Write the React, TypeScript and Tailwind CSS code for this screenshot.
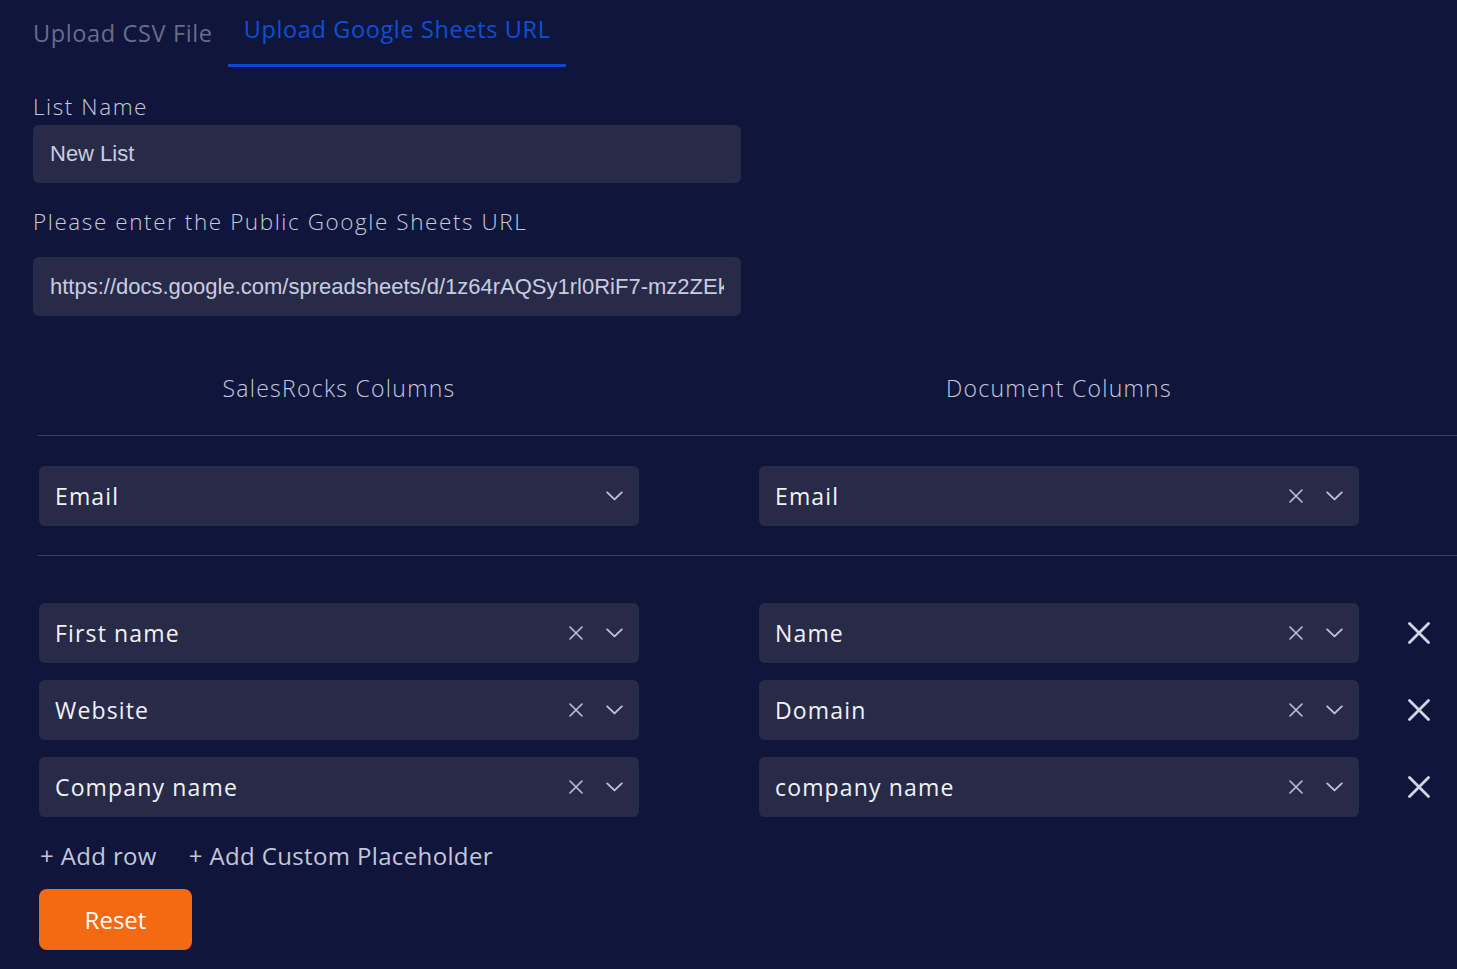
import React from "react";

const SmallX = () => (
  <svg width="14" height="14" viewBox="0 0 14 14" fill="none">
    <path d="M1 1L13 13M13 1L1 13" stroke="#bec1d5" strokeWidth="1.6" strokeLinecap="round" />
  </svg>
);

const Chevron = () => (
  <svg width="17" height="10" viewBox="0 0 17 10" fill="none">
    <path d="M1.2 1.4L8.5 8.4L15.8 1.4" stroke="#bec1d5" strokeWidth="1.9" strokeLinecap="round" strokeLinejoin="round" />
  </svg>
);

const BigX = () => (
  <svg width="22" height="22" viewBox="0 0 22 22" fill="none">
    <path d="M1.5 1.5L20.5 20.5M20.5 1.5L1.5 20.5" stroke="#d3d5e7" strokeWidth="2.8" strokeLinecap="round" />
  </svg>
);

function Select({ value, clearable = true }: { value: string; clearable?: boolean }) {
  return (
    <div className="flex items-center h-[60px] w-[600px] rounded-[6px] bg-[#282b48] pl-[16px] pr-[7px]">
      <div className="flex-1 text-[23px] text-[#f1f2f7] tracking-[0.05em] leading-none">{value}</div>
      {clearable && (
        <div className="w-[40px] flex justify-center items-center">
          <SmallX />
        </div>
      )}
      <div className="w-[36px] flex justify-center items-center">
        <Chevron />
      </div>
    </div>
  );
}

function Row({ left, right, leftClear = true, removable = true }: { left: string; right: string; leftClear?: boolean; removable?: boolean }) {
  return (
    <div className="flex items-center pl-[1px]">
      <Select value={left} clearable={leftClear} />
      <div className="ml-[120px]">
        <Select value={right} />
      </div>
      {removable && (
        <div className="ml-[49px] flex items-center">
          <BigX />
        </div>
      )}
    </div>
  );
}

export default function App() {
  return (
    <div className="min-h-screen bg-[#10163b] font-['Open_Sans',sans-serif] pb-[19px]">
      <div className="flex pl-[17px] h-[67px]">
        <button className="pl-4 pr-[15px] h-full flex items-center pt-[3px] text-[23.5px] text-[#686d8c] border-b-[3px] border-transparent tracking-[0.027em]">
          Upload CSV File
        </button>
        <button className="pl-4 pr-[15px] h-full flex items-center pb-[4px] text-[23.5px] text-[#0d4fd8] border-b-[3px] border-[#0b48d4] tracking-[0.027em]">
          Upload Google Sheets URL
        </button>
      </div>

      <div className="px-[33px]">
        <div className="mt-[26px] leading-[28px] text-[22.5px] text-[#c7cadf] tracking-[0.07em] font-light">List Name</div>
        <input
          readOnly
          value="New List"
          className="mt-[4px] block h-[58px] w-[708px] rounded-[6px] bg-[#282b48] px-[17px] text-[22px] text-[#c9cce0] font-['Liberation_Sans',Arial,sans-serif] outline-none"
        />
        <div className="mt-[25px] leading-[28px] text-[22.5px] text-[#c7cadf] tracking-[0.07em] font-light">
          Please enter the Public Google Sheets URL
        </div>
        <input
          readOnly
          value="https://docs.google.com/spreadsheets/d/1z64rAQSy1rl0RiF7-mz2ZEkq8t0xW"
          className="mt-[21px] block h-[59px] w-[708px] rounded-[6px] bg-[#282b48] px-[17px] text-[22px] text-[#c9cce0] font-['Liberation_Sans',Arial,sans-serif] outline-none"
        />
      </div>

      <div className="ml-[38px]">
        <div className="mt-[58px] flex pl-[1px] leading-[28px] text-[23px] text-[#c7cadf] tracking-[0.055em] font-light">
          <div className="w-[600px] text-center">SalesRocks Columns</div>
          <div className="ml-[120px] w-[600px] text-center">Document Columns</div>
        </div>
        <div className="mt-[33px] border-t border-[#3a3f5e]" />
        <div className="mt-[30px]">
          <Row left="Email" right="Email" leftClear={false} removable={false} />
        </div>
        <div className="mt-[29px] border-t border-[#3a3f5e]" />
        <div className="mt-[47px] flex flex-col gap-[17px]">
          <Row left="First name" right="Name" />
          <Row left="Website" right="Domain" />
          <Row left="Company name" right="company name" />
        </div>
        <div className="mt-[25px] flex items-center leading-[28px] text-[24px] text-[#c3c6dc] pl-[2px] tracking-[0.015em]">
          <button>+ Add row</button>
          <button className="ml-[32px]">+ Add Custom Placeholder</button>
        </div>
        <button className="mt-[19px] ml-[1px] h-[61px] w-[153px] rounded-[8px] bg-[#f36a12] text-white text-[24px] flex items-center justify-center">
          Reset
        </button>
      </div>
    </div>
  );
}
